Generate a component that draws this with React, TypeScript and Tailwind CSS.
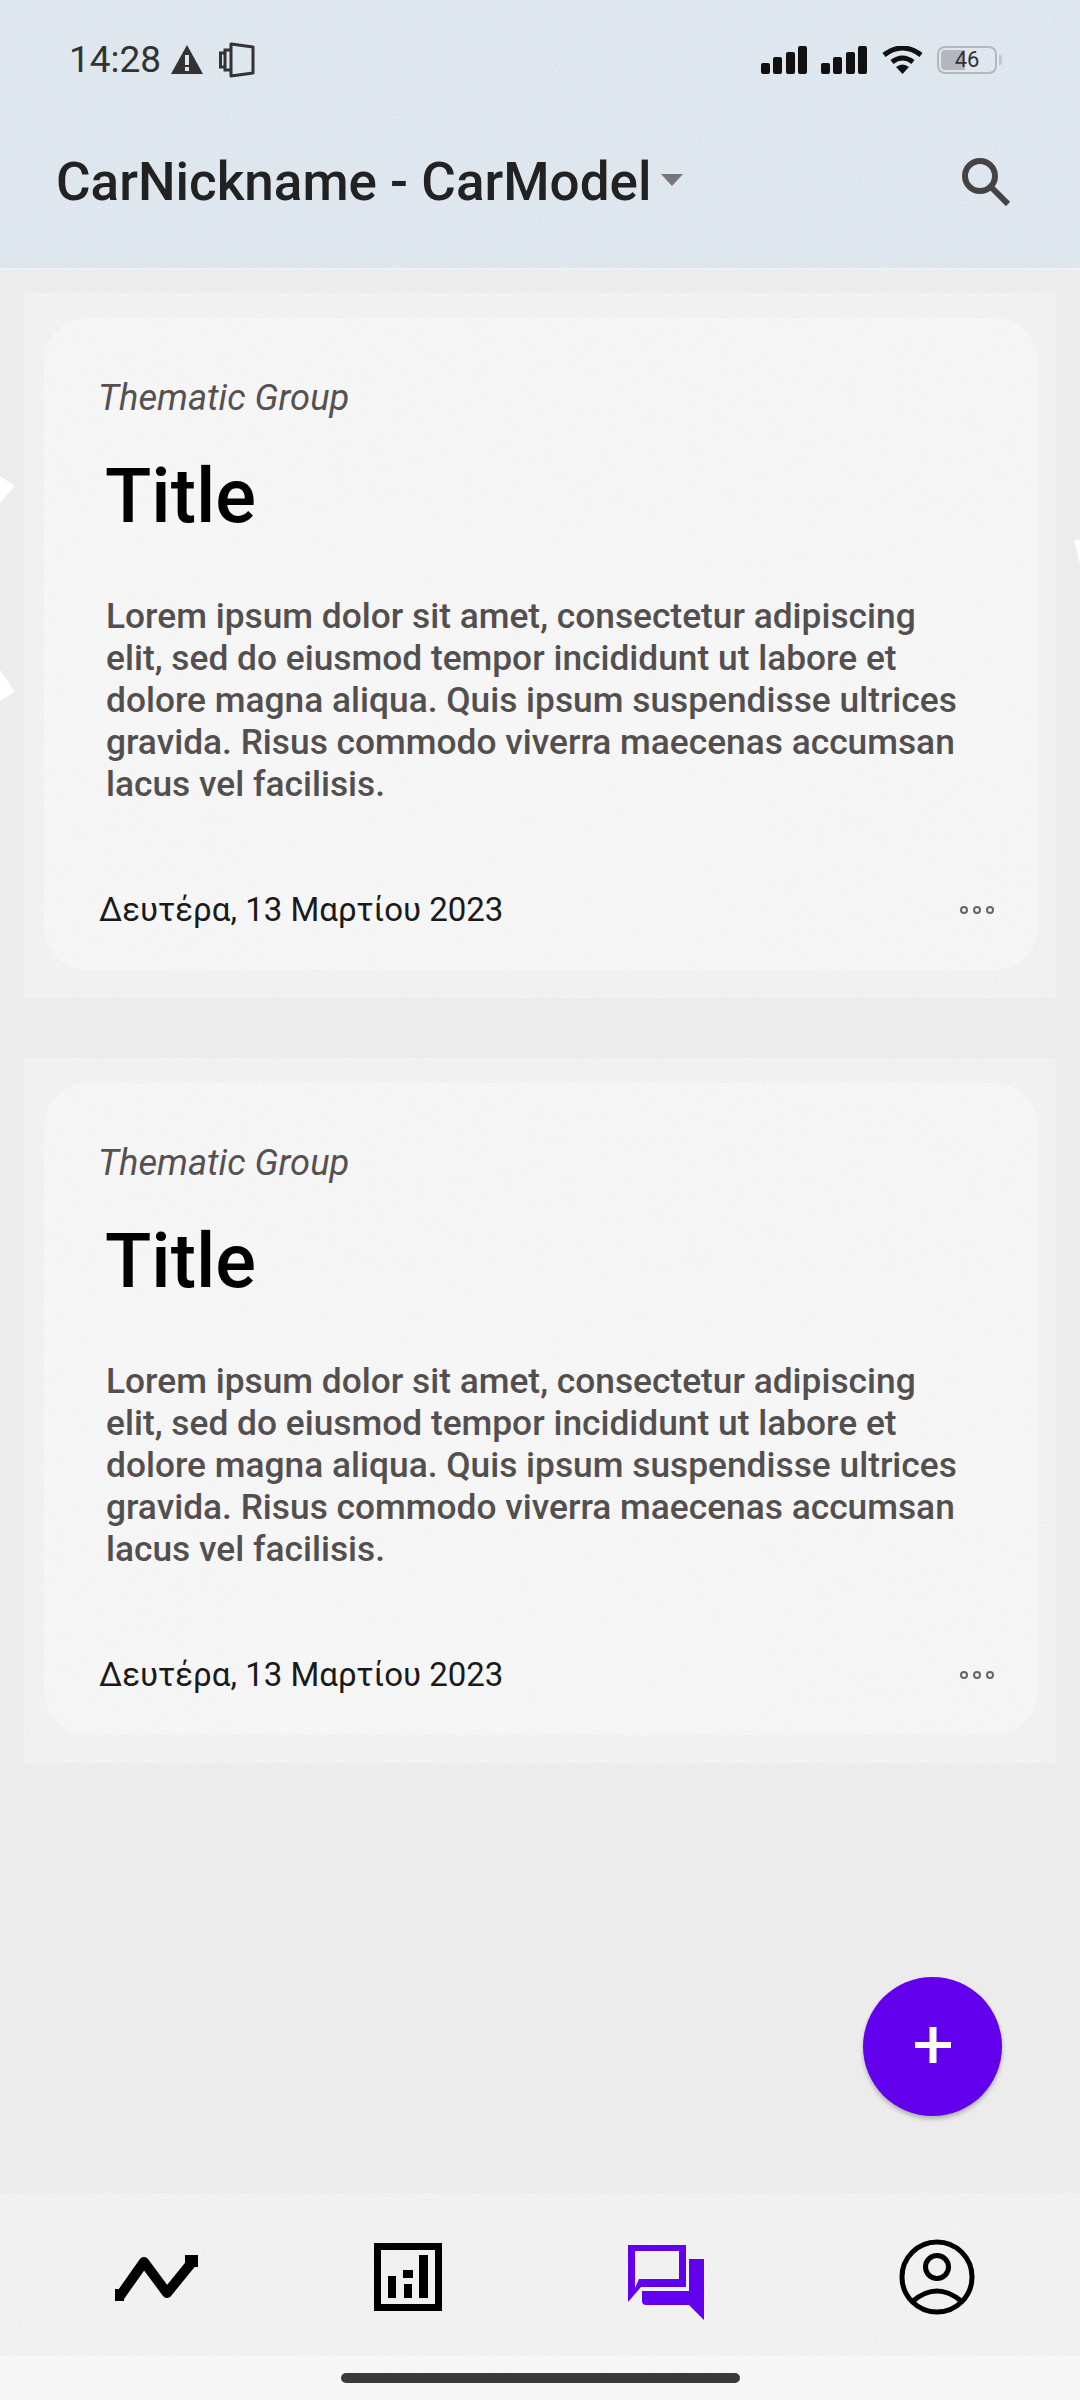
import React from "react";

const lorem =
  "Lorem ipsum dolor sit amet, consectetur adipiscing elit, sed do eiusmod tempor incididunt ut labore et dolore magna aliqua. Quis ipsum suspendisse ultrices gravida. Risus commodo viverra maecenas accumsan lacus vel facilisis.";

function Grain({ o }: { o: string }) {
  return (
    <svg className={"absolute inset-0 w-full h-full pointer-events-none " + o} aria-hidden="true">
      <filter id="grain">
        <feTurbulence type="fractalNoise" baseFrequency="0.8" numOctaves="2" stitchTiles="stitch" />
        <feColorMatrix values="0 0 0 0 1  0 0 0 0 1  0 0 0 0 1  5 0 0 0 -2.500" />
      </filter>
      <rect width="100%" height="100%" filter="url(#grain)" />
    </svg>
  );
}

function Signal() {
  return (
    <svg width="46" height="28" viewBox="0 0 46 28" fill="#111">
      <rect x="0" y="17" width="9" height="11" rx="2" />
      <rect x="12" y="11" width="9" height="17" rx="2" />
      <rect x="25" y="6" width="9" height="22" rx="2" />
      <rect x="37" y="0" width="9" height="28" rx="2" />
    </svg>
  );
}

function Card() {
  return (
    <div className="relative h-[705px] bg-[#f0f0f0] pt-[25px] pl-[20px] pr-[18px]">
      <Grain o="opacity-30" />
      <div className="relative h-[652px] rounded-[44px] bg-[#f5f5f5] pl-[55px] pr-[41px] flex flex-col overflow-hidden">
        <Grain o="opacity-30" />
        <div className="relative mt-[60px] ml-[-1px] h-[40px] leading-[40px] italic text-[36.300px] text-[#565151]">Thematic Group</div>
        <div className="relative mt-[34px] ml-[6px] h-[88px] leading-[88px] font-medium text-[76px] text-black">Title</div>
        <p className="relative mt-[55px] ml-[7px] w-[862px] text-[35.300px] leading-[42px] font-medium text-[#544f4f]">{lorem}</p>
        <div className="relative mt-[85px] flex items-center justify-between">
          <span className="text-[33px] leading-[40px] text-[#1a1a1a]">Δευτέρα, 13 Μαρτίου 2023</span>
          <span className="flex gap-[5px] mr-[3px]">
            <span className="w-[8px] h-[8px] rounded-full border-[2px] border-[#666]" />
            <span className="w-[8px] h-[8px] rounded-full border-[2px] border-[#666]" />
            <span className="w-[8px] h-[8px] rounded-full border-[2px] border-[#666]" />
          </span>
        </div>
      </div>
    </div>
  );
}

export default function App() {
  return (
    <div className="relative w-[1080px] h-[2400px] overflow-hidden bg-[#ececec] flex flex-col font-['Roboto',sans-serif]">
      <header className="relative h-[270px] shrink-0 bg-[#dde5ed] border-b-[2px] border-[#eef1f5] flex flex-col">
        <Grain o="opacity-20" />
        <div className="relative h-[119px] pl-[69px] pr-[83px] flex items-center">
          <span className="text-[37px] leading-[44px] text-[#333]">14:28</span>
          <svg className="ml-[10px]" width="32" height="29" viewBox="0 0 32 29">
            <path d="M16 0 L32 29 H0 Z" fill="#333" />
            <rect x="14" y="10" width="4" height="10" fill="#dde5ed" />
            <rect x="14" y="22" width="4" height="4" fill="#dde5ed" />
          </svg>
          <svg className="ml-[16px]" width="36" height="36" viewBox="0 0 36 36" fill="none" stroke="#333" strokeWidth="3">
            <path d="M12 2 L34 5 V31 L12 34 Z" strokeLinejoin="round" />
            <path d="M11 8 H6 V28 H11" />
            <path d="M6 11 H1.500 V25 H6" />
          </svg>
          <div className="ml-auto flex items-center">
            <Signal />
            <div className="ml-[14px]"><Signal /></div>
            <svg className="ml-[15px]" width="41" height="28" viewBox="0 0 41 28" fill="none" stroke="#111" strokeWidth="5">
              <path d="M2 9 Q20.500 -5 39 9" />
              <path d="M10 16 Q20.500 8 31 16" />
              <path d="M14 21 L20.500 28 L27 21 Q20.500 16 14 21 Z" fill="#111" stroke="none" />
            </svg>
            <div className="relative ml-[14px] w-[60px] h-[28px] rounded-[8px] border-[2px] border-[#b4b8be] p-[2px]">
              <div className="h-full w-[24px] rounded-l-[4px] bg-[#b4b8be]" />
              <span className="absolute inset-0 flex items-center justify-center text-[22px] leading-none text-[#333]">46</span>
              <div className="absolute right-[-7px] top-[7px] w-[3px] h-[10px] rounded-r-[2px] bg-[#c2c6cc]" />
            </div>
          </div>
        </div>
        <div className="relative h-[128px] pl-[56px] pr-[70px] pb-[2px] flex items-center">
          <span className="text-[53px] leading-[60px] font-medium text-[#222]">CarNickname - CarModel</span>
          <svg className="ml-[10px] mt-[-4px]" width="22" height="12" viewBox="0 0 22 12"><path d="M0 0 H22 L11 12 Z" fill="#777" /></svg>
          <svg className="ml-auto" width="48" height="48" viewBox="0 0 48 48" fill="none" stroke="#444" strokeWidth="6">
            <circle cx="18" cy="18" r="15" />
            <path d="M29 29 L46 46" />
          </svg>
        </div>
      </header>

      <main className="flex-1 pt-[23px] pl-[24px] pr-[24px] flex flex-col gap-[60px]">
        <Card />
        <Card />
      </main>

      <svg className="absolute left-0 top-[476px]" width="16" height="226" viewBox="0 0 16 226" fill="#ffffff">
        <path d="M0 0 L15 10 L0 27 Z" />
        <path d="M0 194 L15 216 L0 225 Z" />
      </svg>
      <svg className="absolute right-0 top-[540px]" width="6" height="24" viewBox="0 0 6 24" fill="#ffffff">
        <path d="M0 0 L6 0 V24 Z" />
      </svg>

      <button className="absolute left-[863px] top-[1977px] w-[139px] h-[139px] rounded-full bg-[#6200ee] shadow-[0_3px_4px_rgba(0,0,0,0.25)] flex items-center justify-center">
        <svg className="mb-[4px]" width="36" height="36" viewBox="0 0 36 36" fill="#ffffff">
          <rect x="14.500" y="0" width="7" height="36" />
          <rect x="0" y="15" width="36" height="6" />
        </svg>
      </button>

      <nav className="relative h-[207px] shrink-0 bg-[#f0f0f0] flex flex-col">
        <Grain o="opacity-30" />
        <div className="relative h-[163px] pl-[115px] flex items-center pt-[5px]">
          <svg width="84" height="50" viewBox="0 0 84 50" fill="none" stroke="#000" strokeWidth="10" strokeLinejoin="round" className="mt-[2px]">
            <path d="M5 43 L29 9 L52 40 L78 8" />
            <rect x="0" y="36" width="9" height="12" fill="#000" stroke="none" />
            <rect x="70" y="2" width="13" height="12" fill="#000" stroke="none" />
          </svg>
          <svg width="68" height="68" viewBox="0 0 68 68" fill="#000" className="ml-[175px]">
            <path fillRule="evenodd" d="M0 0 H68 V68 H0 Z M7 7 V61 H61 V7 Z" />
            <rect x="14" y="33" width="8" height="22" />
            <rect x="29" y="27" width="10" height="8" />
            <rect x="30" y="41" width="8" height="14" />
            <rect x="45" y="12" width="9" height="43" />
          </svg>
          <svg width="76" height="75" viewBox="628 2245 76 75" fill="#6200ee" className="ml-[186px] mt-[10px]">
            <path fillRule="evenodd" d="M628 2245 H686 V2287 H641 L628 2302 Z M635 2251 V2288 L639 2279 H679 V2251 Z" />
            <path d="M689 2259 H704 V2320 L689 2305 H646 Q642 2305 642 2301 V2291 H689 Z" />
          </svg>
          <svg width="76" height="76" viewBox="0 0 76 76" fill="none" stroke="#000" strokeWidth="5" className="ml-[195px]">
            <circle cx="38" cy="38" r="35" />
            <circle cx="38" cy="28" r="11.500" />
            <path d="M14 62 Q38 42 62 62" />
          </svg>
        </div>
        <div className="relative flex-1 bg-[#f6f6f6] flex justify-center pt-[17px] overflow-hidden">
          <Grain o="opacity-30" />
          <div className="relative w-[399px] h-[10px] rounded-full bg-[#3a3a3a]" />
        </div>
      </nav>
    </div>
  );
}
